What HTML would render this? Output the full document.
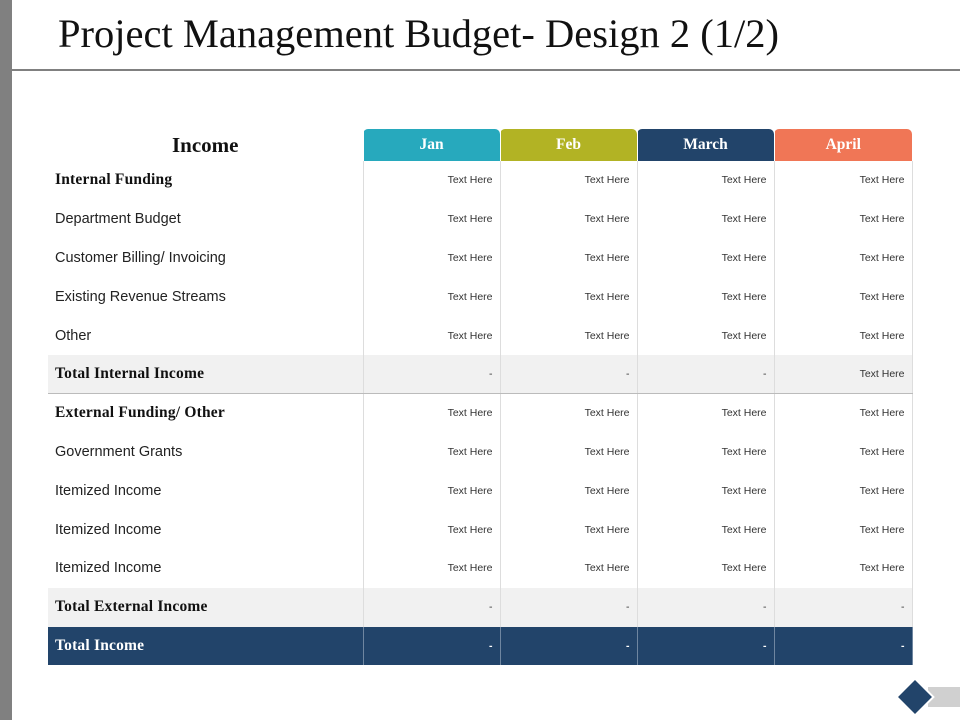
<!DOCTYPE html>
<html><head><meta charset="utf-8"><style>
*{margin:0;padding:0;box-sizing:border-box}
body{width:960px;height:720px;background:#fff;position:relative;overflow:hidden;font-family:"Liberation Sans",Arial,sans-serif}
.bar{position:absolute;left:0;top:0;width:12px;height:720px;background:#808080}
.title{position:absolute;left:58px;top:10px;font-family:"Liberation Serif",serif;font-size:40.5px;color:#111;white-space:nowrap}
.hr{position:absolute;left:12px;right:0;top:69px;height:2px;background:#808080}
table{position:absolute;left:48px;top:129px;border-collapse:collapse;table-layout:fixed}
td{height:38.8px;font-size:10.5px;color:#333;text-align:right;padding-right:7px;border-left:1px solid #ddd;border-right:1px solid #ddd}
td.l{text-align:left;padding-left:7px;font-size:14.5px;color:#222;border:none}
td.b{font-family:"Liberation Serif",serif;font-weight:bold;font-size:15.5px;color:#111;letter-spacing:0.2px}
tr.h td{height:32px;color:#fff;text-align:center;padding:0;font-family:"Liberation Serif",serif;font-weight:bold;font-size:15.5px;border:none;border-left:1px solid #fff;border-radius:5px 5px 0 0}
tr.h td.inc{background:#fff;color:#111;font-size:21px;border-radius:0;text-align:center;border:none}
tr.s td{background:#f1f1f1}
tr.s1 td{border-bottom:1.5px solid #bbb}
tr.n td{background:#22446a;color:#fff;font-weight:bold;border-color:#6f86a0}
tr.n td.b{color:#fff}
.dia{position:absolute;left:903px;top:685px;width:24px;height:24px;background:#22446a;transform:rotate(45deg);box-shadow:0 0 0 2px #fff}
.gb{position:absolute;left:928px;top:687px;width:32px;height:20px;background:#d0d0d0}
</style></head><body>
<div class="bar"></div>
<div class="title">Project Management Budget- Design 2 (1/2)</div>
<div class="hr"></div>
<table>
<colgroup><col style="width:315px"><col style="width:137px"><col style="width:137px"><col style="width:137px"><col style="width:138px"></colgroup>
<tr class="h"><td class="inc">Income</td><td style="background:#27a9bd">Jan</td><td style="background:#b2b324">Feb</td><td style="background:#22446a">March</td><td style="background:#f07656">April</td></tr>
<tr><td class="l b">Internal Funding</td><td>Text Here</td><td>Text Here</td><td>Text Here</td><td>Text Here</td></tr>
<tr><td class="l">Department Budget</td><td>Text Here</td><td>Text Here</td><td>Text Here</td><td>Text Here</td></tr>
<tr><td class="l">Customer Billing/ Invoicing</td><td>Text Here</td><td>Text Here</td><td>Text Here</td><td>Text Here</td></tr>
<tr><td class="l">Existing Revenue Streams</td><td>Text Here</td><td>Text Here</td><td>Text Here</td><td>Text Here</td></tr>
<tr><td class="l">Other</td><td>Text Here</td><td>Text Here</td><td>Text Here</td><td>Text Here</td></tr>
<tr class="s s1"><td class="l b">Total Internal Income</td><td>-</td><td>-</td><td>-</td><td>Text Here</td></tr>
<tr><td class="l b">External Funding/ Other</td><td>Text Here</td><td>Text Here</td><td>Text Here</td><td>Text Here</td></tr>
<tr><td class="l">Government Grants</td><td>Text Here</td><td>Text Here</td><td>Text Here</td><td>Text Here</td></tr>
<tr><td class="l">Itemized Income</td><td>Text Here</td><td>Text Here</td><td>Text Here</td><td>Text Here</td></tr>
<tr><td class="l">Itemized Income</td><td>Text Here</td><td>Text Here</td><td>Text Here</td><td>Text Here</td></tr>
<tr><td class="l">Itemized Income</td><td>Text Here</td><td>Text Here</td><td>Text Here</td><td>Text Here</td></tr>
<tr class="s"><td class="l b">Total External Income</td><td>-</td><td>-</td><td>-</td><td>-</td></tr>
<tr class="n"><td class="l b">Total Income</td><td>-</td><td>-</td><td>-</td><td>-</td></tr>
</table>
<div class="gb"></div>
<div class="dia"></div>
</body></html>
